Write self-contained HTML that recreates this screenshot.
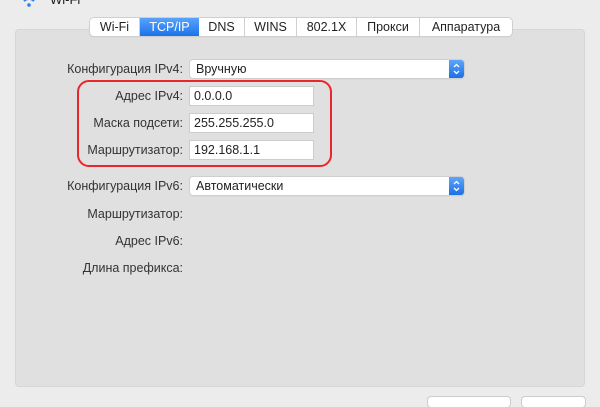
<html><head><style>
body{margin:0;width:600px;height:400px;background:#ececec;font-family:"Liberation Sans",sans-serif;font-size:12px;color:#222;position:relative;overflow:hidden}
.a{position:absolute}
.panel{left:15px;top:29px;width:570px;height:358px;background:#e0e0e0;border-radius:4px;border:1px solid #d6d6d6;box-sizing:border-box}
.tabs{left:90px;top:18px;height:18px;display:flex;background:#fff;border-radius:4px;box-shadow:0 0 0 1px #cfcfcf,0 1px 1px #bbb}
.tabs div{line-height:18px;border-right:1px solid #d0d0d0;font-size:12.5px;text-align:center;box-sizing:border-box}
.tabs .s{background:linear-gradient(#5aa2fb,#1b73ea);color:#fff;border-right:none}
.lbl{text-align:right;width:180px;left:3px;font-size:12.5px;color:#333}
.fld{background:#fff;box-shadow:0 0 0 1px #ccc;height:18px;line-height:18px;padding-left:4px;box-sizing:border-box;font-size:12.5px}
.pop{background:#fff;box-shadow:0 0 0 1px #cfcfcf,0 1px 1px #bbb;border-radius:3px;height:18px;line-height:18px;padding-left:6px;box-sizing:border-box;font-size:12.5px}
.st{position:absolute;right:0;top:0;width:15px;height:18px;background:linear-gradient(#5ea5fb,#1c6fe6);border-radius:0 3px 3px 0}
</style></head><body>
<svg class="a" style="left:18px;top:-6px" width="22" height="16"><path d="M3 4a11 11 0 0 1 16 0M6 7a7 7 0 0 1 10 0" stroke="#2d7cf0" stroke-width="2" fill="none"/><circle cx="11" cy="11" r="1.8" fill="#2d7cf0"/></svg>
<div class="a" style="left:50px;top:-8px;font-size:13px">Wi-Fi</div>
<div class="a panel"></div>
<div class="a tabs"><div style="width:50px">Wi-Fi</div><div class="s" style="width:59px">TCP/IP</div><div style="width:46px">DNS</div><div style="width:52px">WINS</div><div style="width:60px">802.1X</div><div style="width:63px">Прокси</div><div style="width:92px;border:none">Аппаратура</div></div>
<div class="a lbl" style="top:62px">Конфигурация IPv4:</div>
<div class="a pop" style="left:190px;top:60px;width:274px">Вручную<div class="st"><svg width="15" height="18"><path d="M5 7l2.5-2.5L10 7M5 11l2.5 2.5L10 11" stroke="#fff" stroke-width="1.3" fill="none"/></svg></div></div>
<div class="a lbl" style="top:89px">Адрес IPv4:</div>
<div class="a fld" style="left:190px;top:87px;width:123px">0.0.0.0</div>
<div class="a lbl" style="top:116px">Маска подсети:</div>
<div class="a fld" style="left:190px;top:114px;width:123px">255.255.255.0</div>
<div class="a lbl" style="top:143px">Маршрутизатор:</div>
<div class="a fld" style="left:190px;top:141px;width:123px">192.168.1.1</div>
<div class="a" style="left:77px;top:80px;width:255px;height:87px;border:2.5px solid #e8262b;border-radius:12px;box-sizing:border-box"></div>
<div class="a lbl" style="top:179px">Конфигурация IPv6:</div>
<div class="a pop" style="left:190px;top:177px;width:274px">Автоматически<div class="st"><svg width="15" height="18"><path d="M5 7l2.5-2.5L10 7M5 11l2.5 2.5L10 11" stroke="#fff" stroke-width="1.3" fill="none"/></svg></div></div>
<div class="a lbl" style="top:207px">Маршрутизатор:</div>
<div class="a lbl" style="top:234px">Адрес IPv6:</div>
<div class="a lbl" style="top:261px">Длина префикса:</div>
<div class="a" style="left:428px;top:397px;width:82px;height:10px;background:#fff;border-radius:3px;box-shadow:0 0 0 1px #ccc"></div>
<div class="a" style="left:522px;top:397px;width:63px;height:10px;background:#fff;border-radius:3px;box-shadow:0 0 0 1px #ccc"></div>
</body></html>
